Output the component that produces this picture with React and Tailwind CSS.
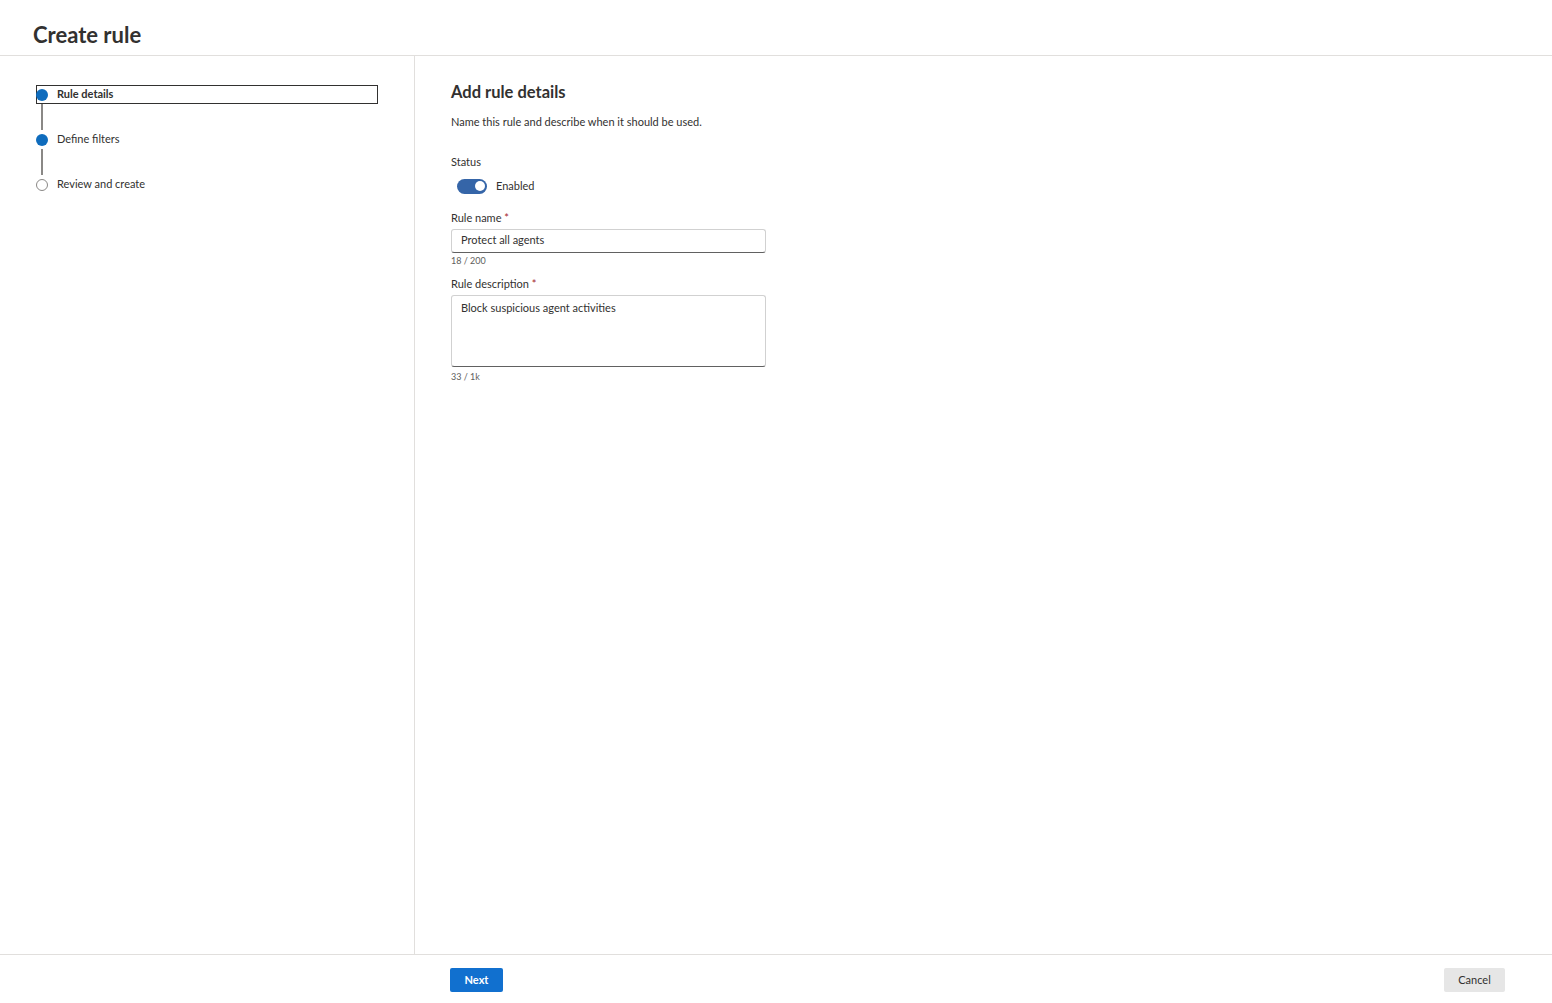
import React, { useState } from "react";

const steps = [
  { label: "Rule details", done: true, current: true },
  { label: "Define filters", done: true },
  { label: "Review and create", done: false },
];

const Stepper = () => {
  return (
    <div className="flex flex-col">
      {steps.map((s, i) => (
        <div key={s.label} className="flex flex-col">
          <div
            className={
              "flex items-center h-[19px] w-[342px] border " +
              (s.current ? "border-[#323130]" : "border-transparent")
            }
          >
            <span
              className={
                "w-[12px] h-[12px] rounded-full shrink-0 -ml-px " +
                (s.done ? "bg-[#0f6cbd]" : "border border-[#8a8886] bg-white")
              }
            />
            <span
              className={
                "ml-[9px] text-[11px] text-[#323130] " + (s.current ? "font-bold" : "")
              }
            >
              {s.label}
            </span>
          </div>
          {i < steps.length - 1 && <div className="ml-[5px] w-[2px] h-[26px] bg-[#8a8886]" />}
        </div>
      ))}
    </div>
  );
};

export default function App() {
  const [enabled, setEnabled] = useState(true);

  return (
    <div
      className="h-[1003px] flex flex-col bg-white text-[#323130]"
      style={{ fontFamily: 'Lato, "Noto Sans", sans-serif' }}
    >
      {/* header */}
      <div className="h-[56px] shrink-0 border-b border-[#e1dfdd] flex items-center px-[33px] pt-[14px]">
        <h1 className="text-[22px] font-bold text-[#323130]">Create rule</h1>
      </div>

      <div className="flex flex-1 min-h-0">
        {/* left nav */}
        <div className="w-[415px] shrink-0 border-r border-[#e1dfdd] pl-[36px] pt-[29px]">
          <Stepper />
        </div>

        {/* form */}
        <div className="flex-1 pl-[36px] pt-[25px]">
          <h2 className="text-[16.5px] font-bold leading-[22px]">Add rule details</h2>
          <p className="mt-[11px] text-[11px] leading-[16px] text-[#323130]">
            Name this rule and describe when it should be used.
          </p>

          <div className="mt-[24px] text-[11px] leading-[16px]">Status</div>
          <div className="mt-[8px] flex items-center ml-[6px]">
            <button
              onClick={() => setEnabled(!enabled)}
              className={
                "w-[30px] h-[15px] rounded-full flex items-center px-[2px] " +
                (enabled ? "bg-[#3565a8] justify-end" : "bg-white border border-[#605e5c] justify-start")
              }
            >
              <span className={"w-[10px] h-[10px] rounded-full " + (enabled ? "bg-white" : "bg-[#605e5c]")} />
            </button>
            <span className="ml-[9px] text-[11px]">Enabled</span>
          </div>

          <div className="mt-[15px] text-[11px] leading-[16px]">
            Rule name <span className="text-[#a4262c]">*</span>
          </div>
          <div className="mt-[3px] w-[315px] h-[24px] rounded-[3px] border border-[#d1d1d1] border-b-[#616161] flex items-center px-[9px] text-[11px]">
            Protect all agents
          </div>
          <div className="mt-[2px] text-[9px] leading-[12px] text-[#605e5c]">18 / 200</div>

          <div className="mt-[9px] text-[11px] leading-[16px]">
            Rule description <span className="text-[#a4262c]">*</span>
          </div>
          <div className="mt-[3px] w-[315px] h-[72px] rounded-[3px] border border-[#d1d1d1] border-b-[#616161] px-[9px] pt-[4px] text-[11px]">
            Block suspicious agent activities
          </div>
          <div className="mt-[4px] text-[9px] leading-[12px] text-[#605e5c]">33 / 1k</div>
        </div>
      </div>

      {/* footer */}
      <div className="h-[49px] shrink-0 border-t border-[#e1dfdd] flex items-start pt-[13px] pl-[450px] pr-[47px]">
        <button className="w-[53px] h-[24px] rounded-[2px] bg-[#1170cf] text-white text-[11px] font-bold">
          Next
        </button>
        <div className="flex-1" />
        <button className="w-[61px] h-[24px] rounded-[2px] bg-[#e6e6e6] text-[#323130] text-[11px]">
          Cancel
        </button>
      </div>
    </div>
  );
}
